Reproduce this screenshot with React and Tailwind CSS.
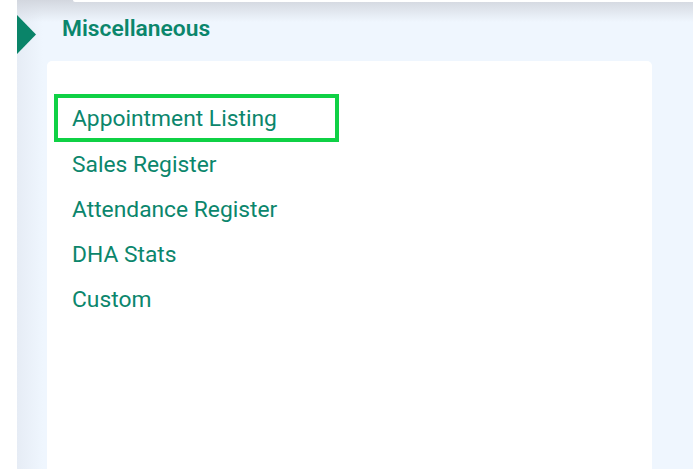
export default function App() {
  const items = ["Sales Register", "Attendance Register", "DHA Stats", "Custom"];
  return (
    <div className="flex h-[469px] w-[693px] overflow-hidden bg-white" style={{ fontFamily: "Roboto, 'Noto Sans', sans-serif" }}>
      <div className="w-[17px] shrink-0 bg-white" />
      <div className="relative flex flex-1 flex-col bg-[#eff6fe] bg-[linear-gradient(to_right,#e6ecf5_0px,#eff6fe_26px)]">
        <div className="pointer-events-none absolute inset-x-0 top-0 h-[22px] bg-[linear-gradient(to_bottom,#d3d7df,rgba(239,246,254,0))]" />
        <div className="pointer-events-none absolute left-[56px] right-0 top-0 h-[2px] rounded-bl-[6px] bg-white" />
        <div className="relative flex h-[61px] shrink-0">
          <svg width="19" height="39" viewBox="0 0 19 39" className="mt-[15px] shrink-0">
            <polygon points="0,0 19,19.5 0,39" fill="#0a8469" />
          </svg>
          <div className="ml-[26px] mt-[14px] text-[22.8px] font-semibold leading-[30px] text-[#0b866c]">Miscellaneous</div>
        </div>
        <div className="ml-[30px] w-[605px] flex-1 rounded-t-[5px] bg-white pl-[7px] pt-[33px]">
          <div className="flex h-[48px] w-[285px] items-center border-4 border-[#0fd145] pl-[14px] pt-[2px] text-[22.8px] text-[#0b866c]">
            Appointment Listing
          </div>
          <div className="mt-[1px]">
            {items.map((t) => (
              <div key={t} className="flex h-[45px] items-center pl-[18px] text-[22.8px] text-[#0b866c]">
                {t}
              </div>
            ))}
          </div>
        </div>
      </div>
    </div>
  );
}
